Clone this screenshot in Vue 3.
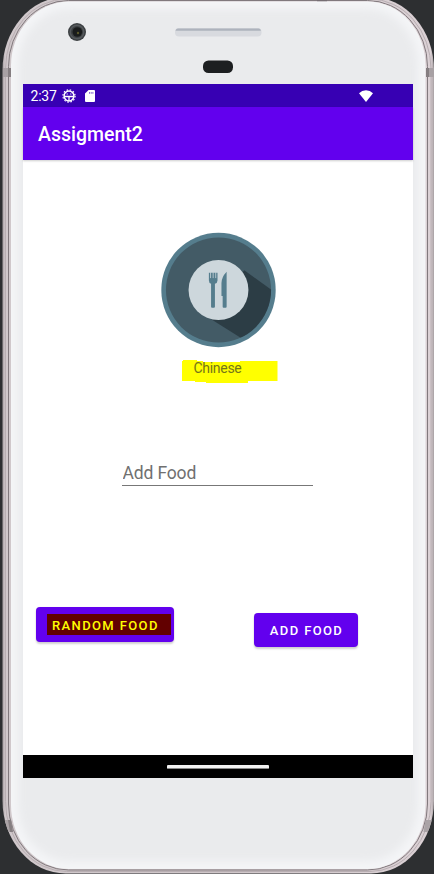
<script setup>
import { ref } from 'vue'

const foods = ref(['Chinese'])
const current = ref('Chinese')
const draft = ref('')

function randomFood() {
  current.value = foods.value[Math.floor(Math.random() * foods.value.length)]
}

function addFood() {
  const name = draft.value.trim()
  if (name) foods.value.push(name)
  draft.value = ''
}
</script>

<template>
  <div class="stage">
    <svg class="shell" viewBox="0 0 434 874" aria-hidden="true">
      <defs>
        <linearGradient id="rim" x1="0" x2="1" y1="0" y2="0">
          <stop offset="0" stop-color="#a79fa2" />
          <stop offset="0.006" stop-color="#d0c8cb" />
          <stop offset="0.5" stop-color="#cfc6c9" />
          <stop offset="0.992" stop-color="#dbd1d5" />
          <stop offset="1" stop-color="#a79fa2" />
        </linearGradient>
        <filter id="soft" x="-10%" y="-10%" width="120%" height="120%">
          <feGaussianBlur stdDeviation="4" />
        </filter>
        <clipPath id="face"><rect x="11" y="1.5" width="414.5" height="867.5" rx="58" ry="64" /></clipPath>
        <clipPath id="body"><rect x="2.5" y="-3" width="431.5" height="876.5" rx="63" ry="73" /></clipPath>
      </defs>
      <rect x="2.5" y="-3" width="431.5" height="876.5" rx="63" ry="73" fill="url(#rim)" />
      <rect x="5.5" y="-1" width="425.5" height="872.5" rx="61" ry="70" fill="none" stroke="#b8aeb2" />
      <rect x="8.5" y="0.5" width="419" height="869.5" rx="60" ry="66" fill="none" stroke="#81797d" stroke-width="1" />
      <g clip-path="url(#body)">
        <path d="M3 68H11V77H3zM426 68H434V77H426z" fill="#a8a1a4" />
        <path d="M3 820H11L13 832H5zM425.500 820H434L432 832H423.500z" fill="#aaa3a6" />
        <path d="M8 68H11V77H8zM426 68H429V77H426zM8 820H11L13 832H10z" fill="#857e81" />
      </g>
      <rect x="317" y="0" width="10" height="1.5" fill="#766e73" />
      <rect x="11" y="1.5" width="414.5" height="867.5" rx="58" ry="64" fill="#f4f5f7" />
      <g clip-path="url(#face)">
        <rect x="18" y="9" width="400" height="852" rx="51" ry="57" fill="#eaebed" filter="url(#soft)" />
      </g>
      <circle cx="77" cy="32" r="9" fill="#3d4043" />
      <circle cx="77" cy="32" r="6.8" fill="none" stroke="#55595c" stroke-width="1.4" />
      <circle cx="77.300" cy="32" r="4.800" fill="#191b1c" />
      <circle cx="78" cy="33" r="1.200" fill="#59562b" />
      <rect x="175" y="28" width="86.500" height="8.500" rx="4" fill="#d8dadf" />
      <path d="M178 28.500H258.500q2 0 2.500 2.200H175.500q.5-2.200 2.500-2.200z" fill="#aeb3bd" />
      <rect x="203" y="60.500" width="30" height="12.500" rx="5.500" fill="#1d1f21" />
    </svg>

    <main class="screen">
      <header class="status">
        <span class="clock">2:37</span>
        <svg class="debug" viewBox="0 0 14 14">
          <circle cx="7" cy="7" r="4.900" fill="none" stroke="#fff" stroke-width="1.500" />
          <circle cx="7" cy="7" r="6.100" fill="none" stroke="#fff" stroke-width="1.200" stroke-dasharray="1.500 1.694" />
          <path d="M2.500 7.500H11.500M7 7.500V12" stroke="#fff" stroke-width="1.300" />
          <path d="M4.600 5H5.800M8.200 5H9.400" stroke="#fff" />
        </svg>
        <svg class="card" viewBox="0 0 10 12">
          <path d="M3.600 0H9q1 0 1 1V11q0 1-1 1H1q-1 0-1-1V3.600z" fill="#fff" />
          <path d="M4.500 2V3.800M6.200 2V3.800M7.900 2V3.800" stroke="#3700b3" stroke-width=".6" />
        </svg>
        <svg class="wifi" viewBox="0 0 14 12">
          <path d="M7 12L0 3.300Q3 .2 7 .2T14 3.300z" fill="#fff" />
        </svg>
      </header>

      <div class="appbar"><h1>Assigment2</h1></div>

      <section class="content">
        <svg class="plate" viewBox="0 0 116 116">
          <defs><clipPath id="dish"><circle cx="58" cy="58" r="53" /></clipPath></defs>
          <circle cx="58" cy="58" r="57.700" fill="#557d8d" />
          <circle cx="58" cy="58" r="53" fill="#435b66" />
          <path d="M84 38L124 67V116H96L45 84z" fill="#2c3d45" clip-path="url(#dish)" />
          <circle cx="58" cy="58" r="30.200" fill="#cdd7dc" />
          <g fill="#557d8d">
            <path d="M48.300 40.500H57V48.500q0 2.500-2.600 3.300V75q0 1-1 1h-1.900q-1 0-1-1V51.800q-2.200-.8-2.200-3.300z" />
            <path d="M66.200 39.500V75q0 1-1 1h-2q-1 0-1-1V64h-1.200V51q0-6 5.200-11.500z" />
          </g>
          <path d="M50 40V46M52.600 40V46M55.200 40V46" stroke="#cdd7dc" stroke-width=".8" />
        </svg>
        <div class="result">
          <svg class="marker" viewBox="0 0 96 24"><path d="M1 1H15V2H21V3H58V2H95.500V22H66V24H24V23H13V22H0V2H1z" fill="#ff0" /></svg>
          <span>{{ current }}</span>
        </div>
        <input v-model="draft" class="field" placeholder="Add Food" />
        <div class="actions">
          <button class="btn random" @click="randomFood"><span>RANDOM FOOD</span></button>
          <button class="btn add" @click="addFood">ADD FOOD</button>
        </div>
      </section>

      <footer class="nav"><i class="handle"></i></footer>
    </main>
  </div>
</template>

<style>
body { margin: 0; background: #2d2f31; }
</style>

<style scoped>
* { box-sizing: border-box; }
.stage {
  position: relative;
  width: 434px;
  height: 874px;
  padding: 84px 21px 96px 23px;
  overflow: hidden;
  background: #2d2f31;
  font-family: Roboto, "Liberation Sans", sans-serif;
}
.shell { position: absolute; inset: 0; width: 434px; height: 874px; }
svg { display: block; flex: none; }
.screen {
  position: relative;
  display: flex;
  flex-direction: column;
  width: 390px;
  height: 694px;
  background: #fff;
}
.status {
  display: flex;
  align-items: center;
  flex: none;
  height: 23px;
  padding: 0 40px 0 7.5px;
  background: #3700b3;
  color: #fff;
}
.clock { width: 31.5px; font-size: 14px; line-height: 23px; letter-spacing: -.2px; padding-top: 1px; }
.debug { width: 14px; height: 14px; }
.card { width: 10px; height: 12px; margin-left: 9px; }
.wifi { width: 14px; height: 12px; margin-left: auto; }
.appbar {
  display: flex;
  align-items: center;
  flex: none;
  height: 53px;
  padding: 2px 0 0 15px;
  background: #6200ee;
  box-shadow: 0 1px 2px rgba(0, 0, 0, .2);
}
h1 { margin: 0; color: #fff; font-size: 19.5px; font-weight: 500; line-height: 24px; }
.content { display: flex; flex-direction: column; flex: 1; padding-top: 72px; }
.plate { width: 115px; height: 116px; margin-left: 138px; }
.result {
  position: relative;
  width: 96px;
  height: 24px;
  margin: 11px 0 0 159px;
  padding-left: 11.500px;
  color: #74751a;
  font-size: 14px;
  line-height: 18px;
  letter-spacing: -.3px;
}
.marker { position: absolute; inset: 0; width: 96px; height: 24px; }
.result span { position: relative; }
.field {
  width: 191px;
  height: 27px;
  margin: 76px 0 0 99px;
  padding: 1px 0 0 .5px;
  border: 0;
  border-bottom: 1px solid #777;
  border-radius: 0;
  outline: 0;
  background: none;
  font: 17.500px Roboto, sans-serif;
  letter-spacing: -.15px;
}
.field::placeholder { color: #707070; opacity: 1; }
.actions { display: flex; align-items: flex-start; margin: 121px 0 0 13px; }
.btn {
  height: 34.5px;
  padding: 0;
  border: 0;
  border-radius: 4px;
  background: #6200ee;
  box-shadow: 0 2px 2px rgba(0, 0, 0, .18), 0 0 1px rgba(0, 0, 0, .12);
  color: #fff;
  font: 500 13px Roboto, sans-serif;
  letter-spacing: 1.380px;
}
.random { display: flex; width: 138px; padding: 6.500px 3px 0 11px; color: #ff0; }
.random span {
  flex: 1;
  height: 21px;
  padding-left: 5px;
  background: #620000;
  line-height: 23px;
  text-align: left;
}
.add { width: 104px; height: 34px; margin: 6px 0 0 80px; padding: 0 0 0 1px; }
.nav { display: flex; justify-content: center; flex: none; height: 23px; padding-top: 10px; background: #000; }
.handle { width: 102px; height: 4px; background: #f1f1f1; border-bottom: 1px solid #888; border-radius: 1px; }
</style>
